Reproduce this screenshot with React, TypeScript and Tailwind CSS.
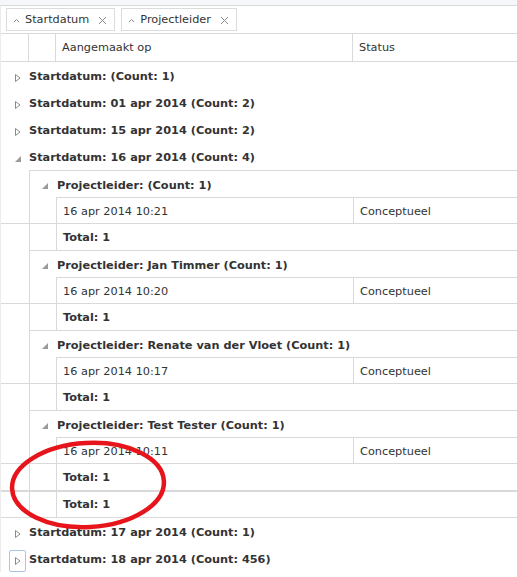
const line = "border-[#d9d9d9]";

function Collapsed() {
  return (
    <svg width="8" height="10" viewBox="0 0 8 10" className="block">
      <path d="M1.5 1.5 L6 5 L1.5 8.5 Z" fill="none" stroke="#8a8a8a" strokeWidth="1" />
    </svg>
  );
}

function Expanded() {
  return (
    <svg width="8" height="8" viewBox="0 0 8 8" className="block">
      <path d="M7 1 L7 7 L1 7 Z" fill="#9a9a9a" />
    </svg>
  );
}

function GroupRow({ label, open, focus }: { label: string; open?: boolean; focus?: boolean }) {
  return (
    <div className="flex h-[27px] items-center pl-2 pt-[4px]">
      <span
        className={
          "flex h-[22px] w-[17px] items-center justify-center rounded-[2px] border " +
          (focus ? "border-[#a9c5ef]" : "border-transparent")
        }
      >
        {open ? <Expanded /> : <Collapsed />}
      </span>
      <span className="ml-[3px] font-bold">{label}</span>
    </div>
  );
}

function SubGroup({ label, date }: { label: string; date: string }) {
  return (
    <>
      <div className="flex h-[27px]">
        <div className="w-[28px]" />
        <div className={`flex flex-1 items-center border-l border-t pl-[7px] pt-[4px] ${line}`}>
          <span className="flex h-[16px] w-[16px] items-center justify-center">
            <Expanded />
          </span>
          <span className="ml-[4px] font-bold">{label}</span>
        </div>
      </div>
      <div className="flex h-[26px]">
        <div className="w-[28px]" />
        <div className={`w-[27px] border-l ${line}`} />
        <div className={`flex w-[297px] items-center border-l border-t pl-[6px] pt-[4px] ${line}`}>{date}</div>
        <div className={`flex flex-1 items-center border-l border-t pl-[6px] pt-[4px] ${line}`}>Conceptueel</div>
      </div>
      <div className="flex h-[27px]">
        <div className={`w-[28px] border-t ${line}`} />
        <div className={`w-[27px] border-l border-t ${line}`} />
        <div className={`flex flex-1 items-center border-l border-t pl-[6px] pt-[2px] font-bold ${line}`}>Total: 1</div>
      </div>
    </>
  );
}

function Chip({ label }: { label: string }) {
  return (
    <div className="flex h-[23px] items-center border border-[#dcdcdc] bg-white pl-[6px] pr-[7px] pt-[2px]">
      <svg width="7" height="5" viewBox="0 0 7 5" className="mr-[5px]">
        <path d="M1 4 L3.5 1.5 L6 4" fill="none" stroke="#888" strokeWidth="1" />
      </svg>
      <span>{label}</span>
      <svg width="9" height="9" viewBox="0 0 9 9" className="ml-[9px]">
        <path d="M1 1 L8 8 M8 1 L1 8" stroke="#8a8a8a" strokeWidth="1" />
      </svg>
    </div>
  );
}

export default function App() {
  return (
    <div
      className="relative h-[577px] w-[517px] overflow-hidden bg-white text-[11.3px] text-[#333]"
      style={{ fontFamily: '"DejaVu Sans", Verdana, sans-serif' }}
    >
      <div className="h-[5px] bg-[#f5f7fa]" />
      <div className={`border-l border-t border-l-[#ececec] ${line}`}>
        {/* Group panel */}
        <div className={`flex h-[28px] items-center gap-[6px] border-b pl-[5px] ${line}`}>
          <Chip label="Startdatum" />
          <Chip label="Projectleider" />
        </div>

        {/* Kolomkoppen */}
        <div className={`flex h-[28px] border-b ${line}`}>
          <div className="w-[27px]" />
          <div className={`w-[27px] border-l ${line}`} />
          <div className={`flex w-[297px] items-center border-l pl-[6px] pt-[2px] ${line}`}>Aangemaakt op</div>
          <div className={`flex flex-1 items-center border-l pl-[6px] pt-[2px] ${line}`}>Status</div>
        </div>

        {/* Rijen */}
        <GroupRow label="Startdatum: (Count: 1)" />
        <GroupRow label="Startdatum: 01 apr 2014 (Count: 2)" />
        <GroupRow label="Startdatum: 15 apr 2014 (Count: 2)" />
        <GroupRow label="Startdatum: 16 apr 2014 (Count: 4)" open />

        <SubGroup label="Projectleider: (Count: 1)" date="16 apr 2014 10:21" />
        <SubGroup label="Projectleider: Jan Timmer (Count: 1)" date="16 apr 2014 10:20" />
        <SubGroup label="Projectleider: Renate van der Vloet (Count: 1)" date="16 apr 2014 10:17" />
        <SubGroup label="Projectleider: Test Tester (Count: 1)" date="16 apr 2014 10:11" />

        <div className={`flex h-[28px] border-b ${line}`}>
          <div className={`w-[28px] border-t-2 ${line}`} />
          <div className={`w-[27px] border-l border-t-2 ${line}`} />
          <div className={`flex flex-1 items-center border-l border-t-2 pl-[6px] pt-[2px] font-bold ${line}`}>Total: 1</div>
        </div>

        <GroupRow label="Startdatum: 17 apr 2014 (Count: 1)" />
        <GroupRow label="Startdatum: 18 apr 2014 (Count: 456)" focus />
      </div>

      {/* Rode markering */}
      <svg className="pointer-events-none absolute left-0 top-0" width="517" height="577">
        <ellipse
          cx="88"
          cy="485"
          rx="76"
          ry="42"
          fill="none"
          stroke="#e8141c"
          strokeWidth="4.5"
          transform="rotate(-3 88 485)"
        />
      </svg>
    </div>
  );
}
